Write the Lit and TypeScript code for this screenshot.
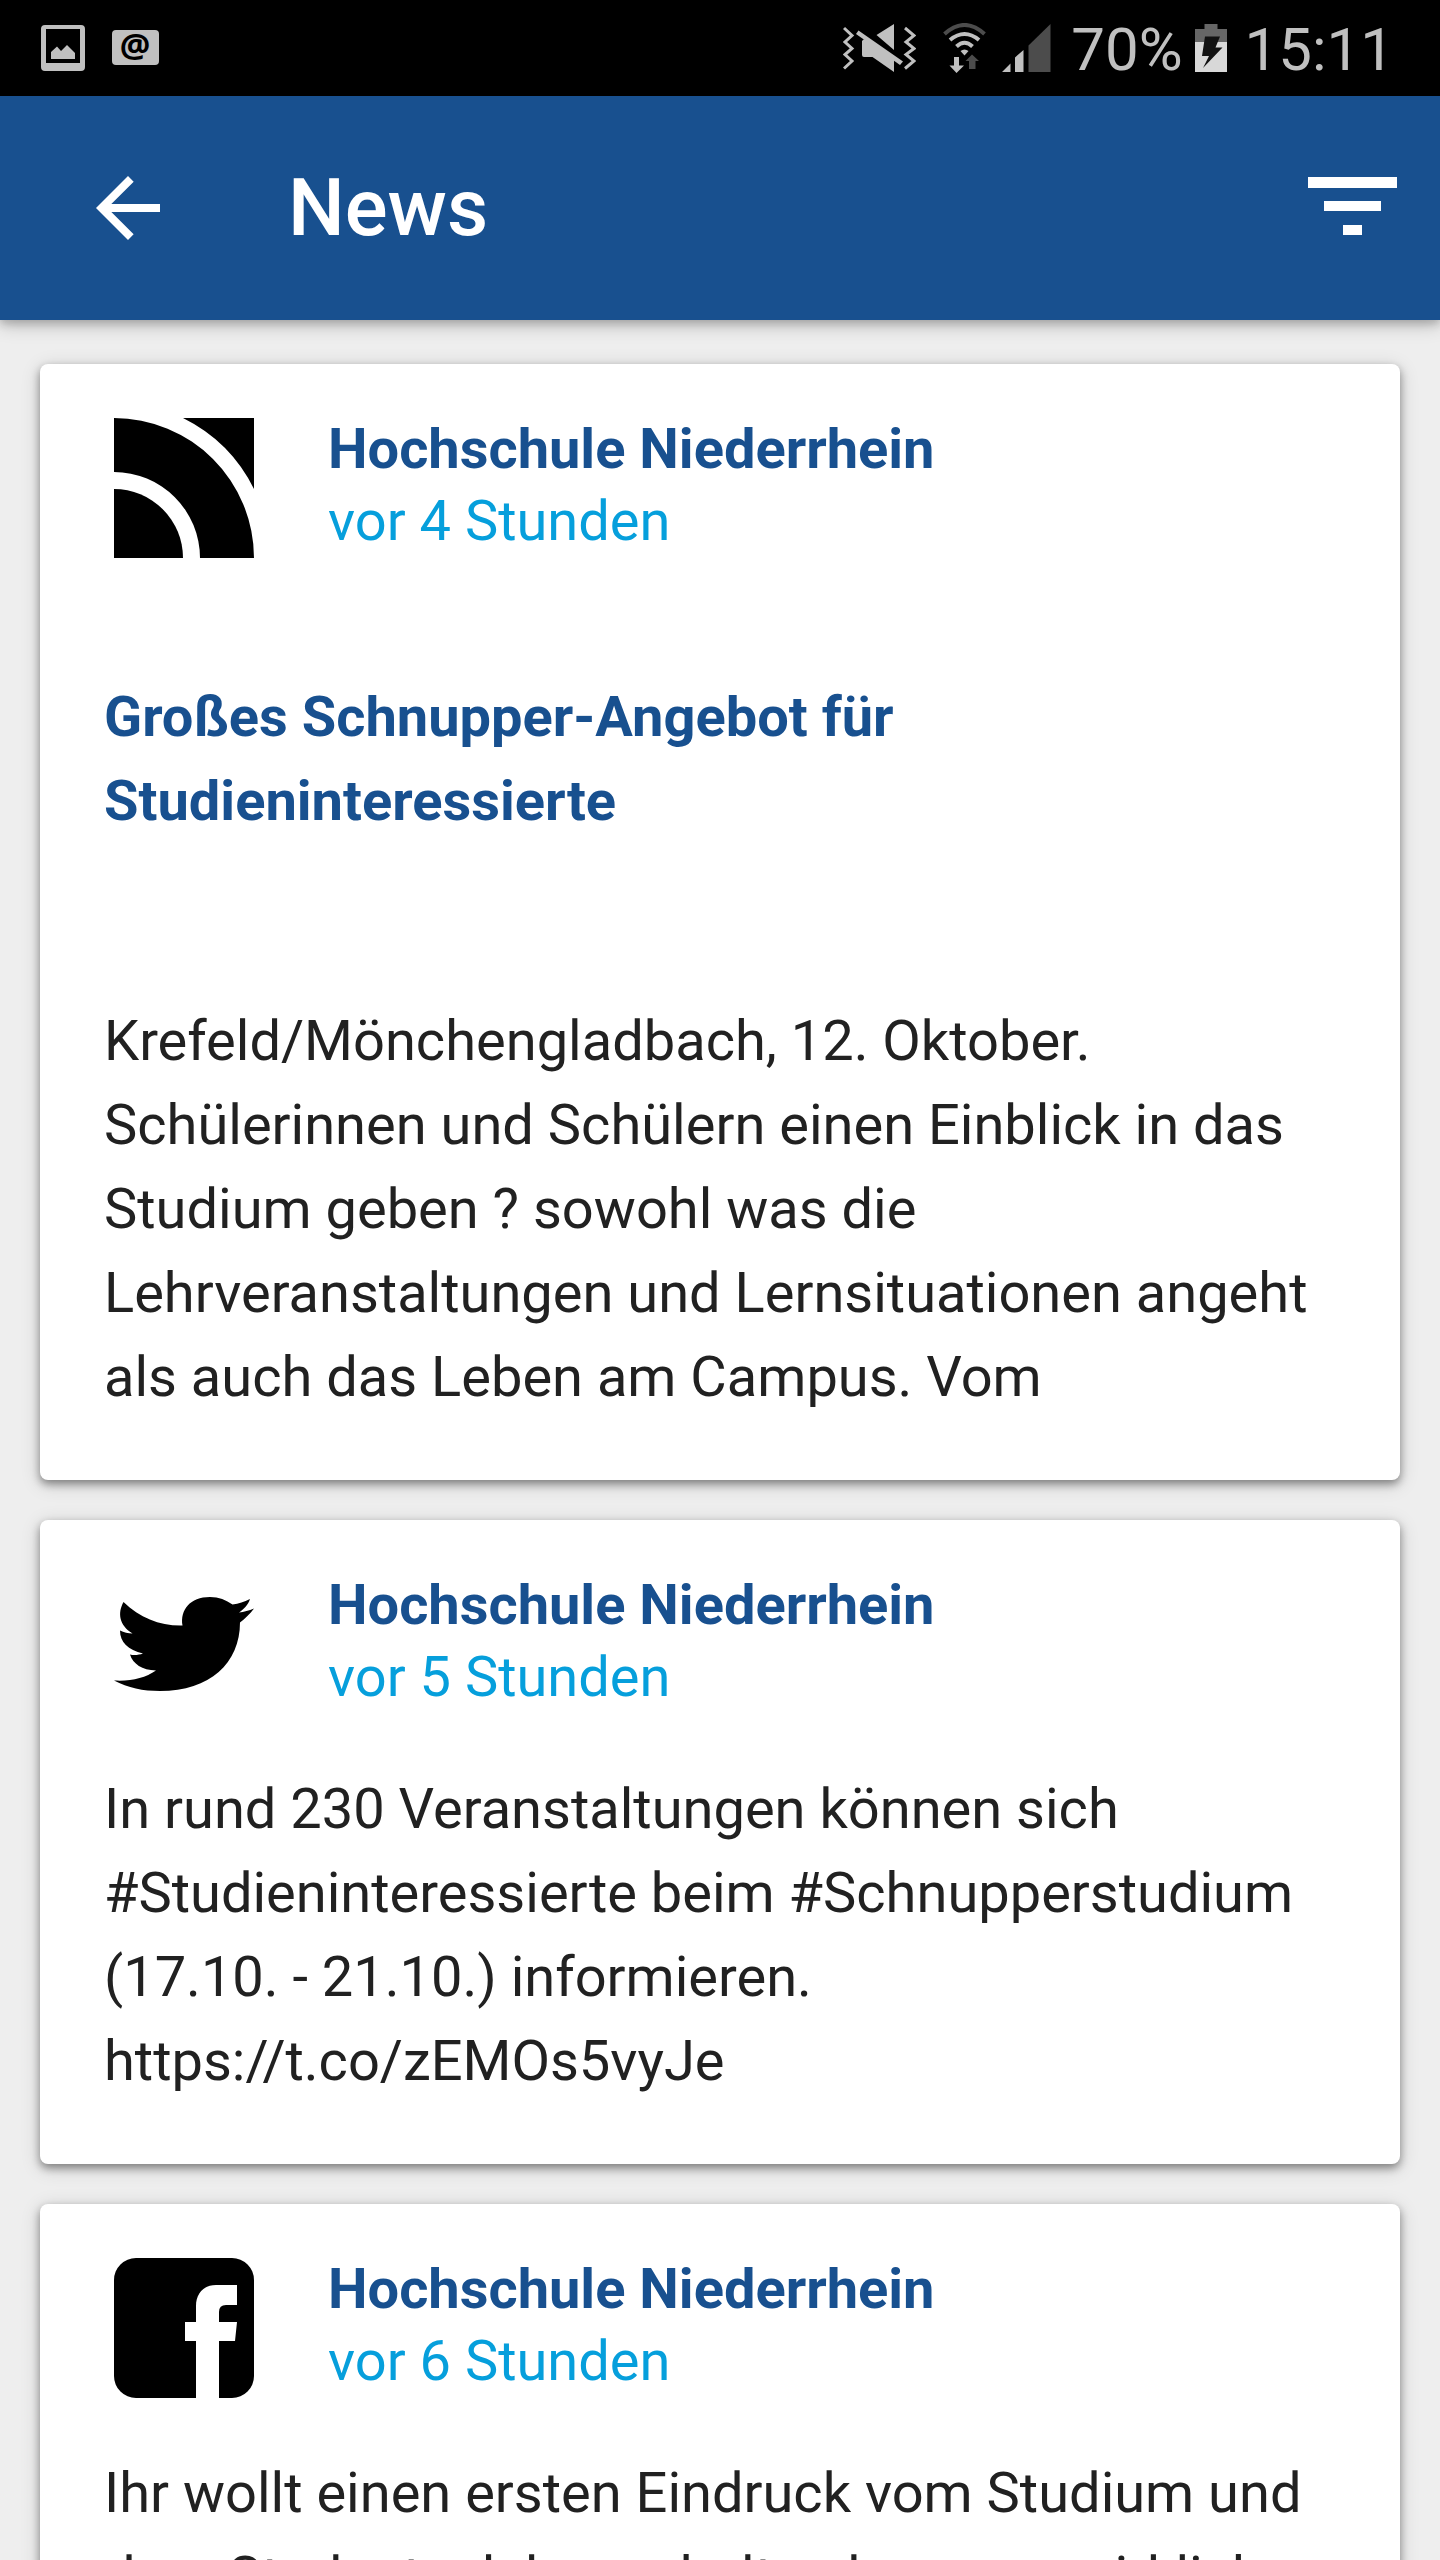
import { LitElement, html, css, svg } from "lit";
import { customElement, property } from "lit/decorators.js";

type Source = "feed" | "twitter" | "facebook";

interface NewsItem {
  source: Source;
  author: string;
  time: string;
  title?: string;
  text: string;
}

const NEWS: NewsItem[] = [
  {
    source: "feed",
    author: "Hochschule Niederrhein",
    time: "vor 4 Stunden",
    title: "Großes Schnupper-Angebot für Studieninteressierte",
    text: "Krefeld/Mönchengladbach, 12. Oktober. Schülerinnen und Schülern einen Einblick in das Studium geben ? sowohl was die Lehrveranstaltungen und Lernsituationen angeht als auch das Leben am Campus. Vom",
  },
  {
    source: "twitter",
    author: "Hochschule Niederrhein",
    time: "vor 5 Stunden",
    text: "In rund 230 Veranstaltungen können sich #Studieninteressierte beim #Schnupperstudium (17.10. - 21.10.) informieren. https://t.co/zEMOs5vyJe",
  },
  {
    source: "facebook",
    author: "Hochschule Niederrhein",
    time: "vor 6 Stunden",
    text: "Ihr wollt einen ersten Eindruck vom Studium und dem Studentenleben erhalten bevor es wirklich",
  },
];

const LOGOS = {
  feed: svg`
    <path d="M0 71A69 69 0 0 1 69 140H0Z"/>
    <path d="M0 54A86 86 0 0 1 86 140H140A140 140 0 0 0 0 0Z"/>
    <path d="M69 0H140V71A157 157 0 0 0 69 0Z"/>`,
  twitter: svg`
    <path d="M9.500 28C26 44 46 52 68.500 51.500C66 36 76 23 96 23C105 23 112 26 118.500 30.500C125 29.500 130 28 136 25C134 31 130 35 125 38.500C130 38 135 36.500 140 34.500C136 40 131 44.500 126 48.500C126 89 96 117 46 117C29 117 14 114 0 106.500C17 107.500 31 104 42 96.500C28 96 19 90 16 80.500C20 81.500 25 81 29 79.500C14 76 6 68 6 56.500C10 58.500 14 59.500 18.500 59.500C5 51 3.500 39 9.500 28Z"/>`,
  facebook: svg`
    <path d="M22 0H118A22 22 0 0 1 140 22V118A22 22 0 0 1 118 140H105V83H121L123 64H105V54Q105 47 112 47H123V27H102C89 27 82 36 82 48V64H71V83H82V140H22A22 22 0 0 1 0 118V22A22 22 0 0 1 22 0Z"/>`,
};

@customElement("status-bar")
class StatusBar extends LitElement {
  static styles = css`
    :host {
      display: flex;
      justify-content: space-between;
      align-items: center;
      height: 96px;
      padding: 0 46px 0 40px;
      box-sizing: border-box;
      background: #000;
      color: #c0c0c0;
      font: 60px/72px Roboto, sans-serif;
    }
    .group { display: flex; align-items: center; }
    .notifications { gap: 26px; }
    svg { display: block; fill: currentColor; }
    .wifi { margin-left: 27px; }
    .signal { margin-left: 16px; }
    .battery { margin-left: 12px; }
    .level, .clock { padding-top: 4px; }
    .level { margin-left: 20px; }
    .clock { margin-left: 18px; }
    .dim { fill: #4c4c4c; }
    .line { fill: none; stroke: currentColor; stroke-width: 3; }
    .arc { fill: none; stroke: currentColor; stroke-width: 4; }
    .arc-dim { fill: none; stroke: #4c4c4c; stroke-width: 4; }
    .at { font: bold 34px "Noto Sans", sans-serif; fill: #000; }
  `;

  render() {
    return html`
      <div class="group notifications">
        <svg width="46" height="48" viewBox="0 0 46 48" role="img" aria-label="Bild">
          <path fill-rule="evenodd" d="M5 1H41Q45 1 45 5V43Q45 47 41 47H5Q1 47 1 43V5Q1 1 5 1ZM6 5V39H40V5Z"/>
          <path d="M11 35V28L17 22.500L21 27L27 21L35 29V35Z"/>
        </svg>
        <svg width="47" height="48" viewBox="0 0 47 48" role="img" aria-label="E-Mail">
          <rect y="6" width="47" height="35" rx="4"/>
          <text class="at" x="23" y="34" text-anchor="middle">@</text>
        </svg>
      </div>
      <div class="group">
        <svg width="73" height="50" viewBox="0 0 73 50" role="img" aria-label="Vibration">
          <path class="line" d="M1 5L9 12.500L2 19L9 25.500L2 31.500L9 38L1 45.500M62 5L71 12.500L63 19L71 25.500L63 31.500L71 38L62 45.500"/>
          <path d="M51 1V27L33.500 12ZM23 16L51 36V49L29.500 34H21Q19 34 19 32V18Q20 16 23 16Z"/>
          <path d="M15.500 7.500L60 38.500L57 42L13 11Z"/>
        </svg>
        <svg class="wifi" width="43" height="50" viewBox="0 0 43 50" role="img" aria-label="WLAN">
          <path class="arc-dim" d="M1.500 11Q21.500 -7 41.500 11"/>
          <path class="arc" d="M7 17Q21.500 5 36 17M13.500 23.500Q21.500 16 29.500 23.500"/>
          <path d="M21.500 32.500L17.500 28Q21.500 25 25.500 28Z"/>
          <path d="M11 34H16V42.500H21L13.500 50L6.500 42.500H11Z"/>
          <path class="dim" d="M26 46H32.500V38H36L29 31.500L22.500 38H26Z"/>
        </svg>
        <svg class="signal" width="49" height="50" viewBox="0 0 49 50" role="img" aria-label="Mobilfunk">
          <path d="M0 49L8.500 40.500V49ZM13 49V34.500L21.500 27V49Z"/>
          <path class="dim" d="M26.500 49V22.500L48.500 1V49Z"/>
        </svg>
        <span class="level">70%</span>
        <svg class="battery" width="32" height="50" viewBox="0 0 32 50" role="img" aria-label="Akku lädt">
          <path fill="#666" d="M0 6H9.500V1H22.500V6H32V19H0Z"/>
          <path fill="#d8d8d8" d="M0 19H32V49H0Z"/>
          <path fill="#111" d="M10 13.500H25L20.500 24.500H27.500L8 45L14 33H7Z"/>
        </svg>
        <span class="clock">15:11</span>
      </div>
    `;
  }
}

@customElement("news-card")
class NewsCard extends LitElement {
  @property({ attribute: false }) item!: NewsItem;

  static styles = css`
    :host { display: block; }
    .card {
      padding: 49px 64px 61px;
      border-radius: 8px;
      background: #fff;
      color: #212121;
      font-size: 56px;
      line-height: 84px;
      box-shadow: 0 4px 8px rgba(0, 0, 0, 0.4), 0 4px 20px rgba(0, 0, 0, 0.16);
    }
    .head { display: flex; align-items: flex-end; gap: 74px; padding: 0 10px; }
    .logo { flex: none; display: block; fill: #000; }
    .meta { padding-bottom: 1px; line-height: 72px; color: #069fdc; }
    .author { margin: 0; font-size: 56px; font-weight: 700; color: #18508f; }
    .time { display: block; }
    .title { margin: 117px 0 156px; font-size: 56px; line-height: 84px; font-weight: 700; color: #18508f; }
    .text { margin: 53px 0 0; }
  `;

  render() {
    const { source, author, time, title, text } = this.item;
    return html`
      <article class="card">
        <header class="head">
          <svg class="logo" width="140" height="140" viewBox="0 0 140 140" role="img" aria-label=${source}>${LOGOS[source]}</svg>
          <div class="meta">
            <h2 class="author">${author}</h2>
            <time class="time">${time}</time>
          </div>
        </header>
        ${title ? html`<h3 class="title">${title}</h3>` : ""}
        <p class="text">${text}</p>
      </article>
    `;
  }
}

@customElement("app-root")
class AppRoot extends LitElement {
  static styles = css`
    :host {
      display: flex;
      flex-direction: column;
      height: 100vh;
      overflow: hidden;
      background: #eee;
      font-family: Roboto, sans-serif;
    }
    .bar {
      flex: none;
      display: flex;
      align-items: center;
      height: 224px;
      padding: 0 40px 0 80px;
      box-sizing: border-box;
      background: #18508f;
      color: #fff;
      box-shadow: 0 4px 8px rgba(0, 0, 0, 0.16), 0 4px 18px rgba(0, 0, 0, 0.24);
    }
    .title { flex: 1; margin: 0 0 0 112px; font-size: 80px; line-height: 98px; font-weight: 500; }
    .action { padding: 0; border: 0; background: none; color: inherit; }
    .action svg { display: block; fill: currentColor; }
    .list { flex: 1; display: flex; flex-direction: column; gap: 40px; min-height: 0; padding: 44px 40px; overflow: hidden; }
    news-card { flex: none; }
  `;

  render() {
    return html`
      <status-bar></status-bar>
      <header class="bar">
        <button class="action" aria-label="Zurück">
          <svg width="96" height="96" viewBox="0 0 24 24">
            <path d="M20 11H7.830L13.420 5.410L12 4L4 12L12 20L13.410 18.590L7.830 13H20Z"/>
          </svg>
        </button>
        <h1 class="title">News</h1>
        <button class="action" aria-label="Filtern">
          <svg width="96" height="96" viewBox="0 0 96 96">
            <path d="M4 17H93V28H4ZM20 41H77V51H20ZM39 65H58V75H39Z"/>
          </svg>
        </button>
      </header>
      <main class="list">
        ${NEWS.map((item) => html`<news-card .item=${item}></news-card>`)}
      </main>
    `;
  }
}
